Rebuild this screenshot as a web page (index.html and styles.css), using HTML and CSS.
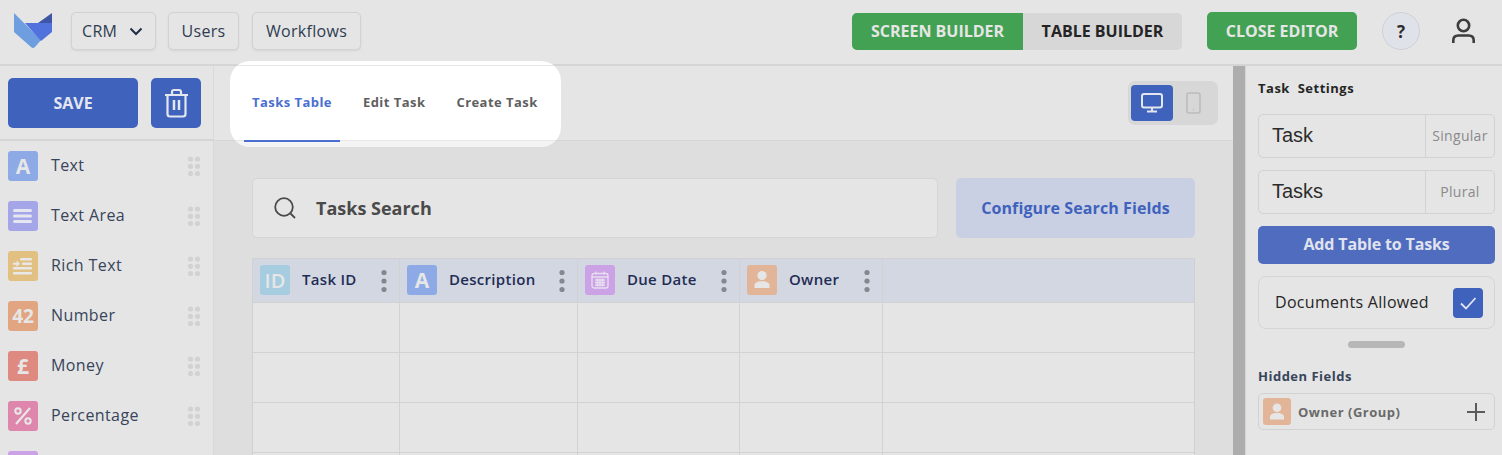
FILE: index.html
```html
<!DOCTYPE html>
<html lang="en">
<head>
  <meta charset="UTF-8" />
  <title>Task Editor</title>
  <link rel="stylesheet" href="styles.css">
</head>
<body>

<svg width="0" height="0" class="sprite">
  <symbol id="person" viewBox="0 0 30 30">
    <circle cx="15" cy="10.5" r="4.6" fill="currentColor"/>
    <path d="M7.5 23v-2.5c0-2.6 2.4-4.3 7.500-4.300s7.500 1.700 7.500 4.300V23z" fill="currentColor"/>
  </symbol>
  <symbol id="grip" viewBox="0 0 14 20">
    <g fill="currentColor">
      <circle cx="3.500" cy="3" r="2.600"/><circle cx="10.500" cy="3" r="2.600"/>
      <circle cx="3.500" cy="10.300" r="2.600"/><circle cx="10.500" cy="10.300" r="2.600"/>
      <circle cx="3.500" cy="17.500" r="2.600"/><circle cx="10.500" cy="17.500" r="2.600"/>
    </g>
  </symbol>
  <symbol id="kebab" viewBox="0 0 6 22">
    <g fill="currentColor"><circle cx="3" cy="3" r="2.600"/><circle cx="3" cy="11.500" r="2.600"/><circle cx="3" cy="20" r="2.600"/></g>
  </symbol>
</svg>

<header class="topbar">
  <svg class="logo" viewBox="0 0 38 36" width="38" height="36">
    <path d="M0 0 L27 27 L21 34 Q19 36 17 34 L0 19z" fill="#6e9de0"/>
    <path d="M11 10 H38 V19 L27 28z" fill="#5172dc"/>
    <path d="M24 10 L38 0 V10z" fill="#3f55a5"/>
  </svg>
  <button class="nav-btn crm-btn">CRM
    <svg width="14" height="9" viewBox="0 0 14 9"><path d="M1.500 1.500 7 7l5.500-5.500" fill="none" stroke="#1f2d45" stroke-width="2"/></svg>
  </button>
  <button class="nav-btn users-btn">Users</button>
  <button class="nav-btn">Workflows</button>

  <div class="builder-switch">
    <span class="builder-tab active">SCREEN BUILDER</span>
    <span class="builder-tab">TABLE BUILDER</span>
  </div>
  <button class="close-btn">CLOSE EDITOR</button>
  <span class="help-btn">?</span>
  <svg class="account" width="23" height="26" viewBox="0 0 23 26" fill="none" stroke="#3d3d3d" stroke-width="2.600">
    <circle cx="11.500" cy="7.500" r="5.700"/>
    <path d="M1.300 25v-2.500c0-3.500 2-5 5-5h10.400c3 0 5 1.500 5 5V25"/>
  </svg>
</header>

<div class="workspace">
  <aside class="fields">
    <div class="actions">
      <button class="save-btn">SAVE</button>
      <button class="trash-btn">
        <svg width="25" height="30" viewBox="0 0 25 30" fill="none" stroke="#e4e6f0" stroke-width="2.200">
          <path d="M1 7h23M8 7V4c0-1.500 1-2 2-2h5c1 0 2 .5 2 2v3"/>
          <path d="M3.500 7v19c0 1.500 1 2.500 2.500 2.500h13c1.500 0 2.500-1 2.500-2.500V7"/>
          <path d="M10 12v10M15 12v10" stroke-width="2.500"/>
        </svg>
      </button>
    </div>
    <div class="field-row">
      <span class="type-icon c-text">A</span><span class="field-name">Text</span>
      <svg class="grip" width="14" height="20"><use href="#grip"/></svg>
    </div>
    <div class="field-row">
      <span class="type-icon c-area">
        <svg width="20" height="14" viewBox="0 0 20 14" fill="#e4e6f0"><rect y="0" width="19" height="3" rx="1.500"/><rect y="5.500" width="19" height="3" rx="1.500"/><rect y="11" width="19" height="3" rx="1.500"/></svg>
      </span><span class="field-name">Text Area</span>
      <svg class="grip" width="14" height="20"><use href="#grip"/></svg>
    </div>
    <div class="field-row">
      <span class="type-icon c-rich">
        <svg width="20" height="17" viewBox="0 0 20 17" fill="#e8e8e8"><rect x="7" y="0" width="12" height="2.500" rx="1"/><rect x="9" y="4.500" width="10" height="2.500" rx="1"/><rect y="9" width="19" height="2.500" rx="1"/><rect y="14" width="19" height="2.500" rx="1"/><path d="M0 4.700h3.500V2.500L7 5.700 3.500 8.800V6.800H0z"/></svg>
      </span><span class="field-name">Rich Text</span>
      <svg class="grip" width="14" height="20"><use href="#grip"/></svg>
    </div>
    <div class="field-row">
      <span class="type-icon c-number">42</span><span class="field-name">Number</span>
      <svg class="grip" width="14" height="20"><use href="#grip"/></svg>
    </div>
    <div class="field-row">
      <span class="type-icon c-money">£</span><span class="field-name">Money</span>
      <svg class="grip" width="14" height="20"><use href="#grip"/></svg>
    </div>
    <div class="field-row">
      <span class="type-icon c-percent">
        <svg width="20" height="20" viewBox="0 0 20 20" fill="none" stroke="#e8e8e8" stroke-width="2"><path d="M17 2 3 18"/><circle cx="5" cy="5" r="2.700"/><circle cx="15" cy="15" r="2.700"/></svg>
      </span><span class="field-name">Percentage</span>
      <svg class="grip" width="14" height="20"><use href="#grip"/></svg>
    </div>
    <div class="field-row">
      <span class="type-icon c-date"></span>
    </div>
  </aside>

  <main class="canvas">
    <div class="tabbar">
      <nav class="tabs">
        <a class="tab active">Tasks Table</a>
        <a class="tab">Edit Task</a>
        <a class="tab">Create Task</a>
      </nav>
      <div class="device-switch">
        <span class="device active">
          <svg width="22" height="20" viewBox="0 0 22 20" fill="none" stroke="#e4e6f0" stroke-width="2"><rect x="1" y="1" width="20" height="13.500" rx="2"/><path d="M11 15v3M6 18.500h10"/></svg>
        </span>
        <span class="device">
          <svg width="15" height="22" viewBox="0 0 15 22" fill="none" stroke="#bcbcbc" stroke-width="1.600"><rect x="1" y="1" width="13" height="20" rx="2"/><path d="M7 17.500h1"/></svg>
        </span>
      </div>
    </div>

    <section class="screen">
      <div class="search-row">
        <div class="search-box">
          <svg width="22" height="22" viewBox="0 0 22 22" fill="none" stroke="#4a4a4a" stroke-width="1.800"><circle cx="10" cy="10" r="8.800"/><path d="m16.500 16.500 4.500 4.500"/></svg>
          <span>Tasks Search</span>
        </div>
        <button class="config-btn">Configure Search Fields</button>
      </div>

      <div class="grid-table">
        <div class="cell head">
          <span class="type-icon c-id">ID</span><span class="col-name">Task ID</span>
          <svg class="kebab" width="6" height="23"><use href="#kebab"/></svg>
        </div>
        <div class="cell head">
          <span class="type-icon c-text">A</span><span class="col-name">Description</span>
          <svg class="kebab" width="6" height="23"><use href="#kebab"/></svg>
        </div>
        <div class="cell head">
          <span class="type-icon c-date">
            <svg width="18" height="18" viewBox="0 0 18 18" fill="none" stroke="#e8e0f0" stroke-width="1.300"><rect x="1" y="2.500" width="16" height="14.500" rx="2"/><path d="M1 6h16M5 .500v3M13 .500v3M4 9h10M4 11.500h10M4 14h10M6.500 7.500v8M9 7.500v8M11.500 7.500v8"/></svg>
          </span><span class="col-name">Due Date</span>
          <svg class="kebab" width="6" height="23"><use href="#kebab"/></svg>
        </div>
        <div class="cell head">
          <span class="type-icon c-owner"><svg width="30" height="30"><use href="#person"/></svg></span><span class="col-name">Owner</span>
          <svg class="kebab" width="6" height="23"><use href="#kebab"/></svg>
        </div>
        <div class="cell head"></div>

        <div class="cell"></div><div class="cell"></div><div class="cell"></div><div class="cell"></div><div class="cell"></div>
        <div class="cell"></div><div class="cell"></div><div class="cell"></div><div class="cell"></div><div class="cell"></div>
        <div class="cell"></div><div class="cell"></div><div class="cell"></div><div class="cell"></div><div class="cell"></div>
        <div class="cell"></div><div class="cell"></div><div class="cell"></div><div class="cell"></div><div class="cell"></div>
      </div>
    </section>
  </main>

  <div class="splitter"></div>

  <aside class="settings">
    <h3 class="settings-title">Task&nbsp; Settings</h3>
    <div class="name-input">
      <span class="name-value">Task</span><span class="name-tag">Singular</span>
    </div>
    <div class="name-input">
      <span class="name-value">Tasks</span><span class="name-tag">Plural</span>
    </div>
    <button class="add-btn">Add Table to Tasks</button>
    <div class="docs-box">
      <span class="docs-label">Documents Allowed</span>
      <span class="checkbox">
        <svg width="18" height="14" viewBox="0 0 18 14" fill="none" stroke="#e4e6f0" stroke-width="1.800"><path d="m2 7.500 5 5L16.500 2"/></svg>
      </span>
    </div>
    <div class="pill"></div>
    <h4 class="hidden-title">Hidden Fields</h4>
    <div class="hidden-field">
      <span class="type-icon small c-owner"><svg width="28" height="28"><use href="#person"/></svg></span>
      <span class="hidden-name">Owner (Group)</span>
      <svg class="plus" width="20" height="20" viewBox="0 0 20 20" stroke="#5a5a5a" stroke-width="2"><path d="M10 1v18M1 10h18"/></svg>
    </div>
  </aside>
</div>

</body>
</html>
```

FILE: styles.css
```css
* {
  box-sizing: border-box;
}

body, html {
  margin: 0;
  padding: 0;
  height: 100%;
  overflow: hidden;
  font-family: 'Open Sans', sans-serif;
  background: #e5e5e5;
}

button {
  font-family: inherit;
  cursor: pointer;
}

.sprite {
  display: block;
  height: 0;
}

/* top bar */
.topbar {
  display: flex;
  align-items: center;
  height: 66px;
  padding: 0 27px 2px 14px;
  border-bottom: 2px solid #d5d5d5;
}

.logo {
  margin-right: 19px;
}

.nav-btn {
  height: 38px;
  margin-right: 13px;
  padding: 0 13px;
  background: #e5e5e5;
  border: 1px solid #d2d2d2;
  border-radius: 5px;
  box-shadow: 0 1px 2px rgba(0,0,0,0.08);
  color: #2f3c50;
  font-size: 16px;
  letter-spacing: 0.3px;
}

.crm-btn {
  display: flex;
  align-items: center;
  gap: 12px;
  width: 85px;
  padding: 0 10px;
  margin-right: 12px;
}

.users-btn {
  width: 71px;
  padding: 0;
}

.builder-switch {
  display: flex;
  height: 37px;
  margin-left: auto;
  background: #d7d7d7;
  border-radius: 5px;
  overflow: hidden;
}

.builder-tab {
  display: flex;
  align-items: center;
  justify-content: center;
  width: 159px;
  color: #242424;
  font-size: 16px;
  font-weight: 700;
}

.builder-tab.active {
  width: 171px;
  background: #43a153;
  color: #e6e6e6;
}

.close-btn {
  width: 150px;
  height: 38px;
  margin-left: 25px;
  background: #43a153;
  border: none;
  border-radius: 5px;
  color: #e6e6e6;
  font-size: 16px;
  font-weight: 700;
}

.help-btn {
  display: flex;
  align-items: center;
  justify-content: center;
  width: 38px;
  height: 38px;
  margin-left: 25px;
  background: #e0e2ea;
  border: 1px solid #cfd0d6;
  border-radius: 50%;
  color: #2c2c2c;
  font-size: 17px;
  font-weight: 700;
}

.account {
  margin-left: 32px;
}

/* main columns */
.workspace {
  display: flex;
  height: 389px;
}

.fields {
  flex: 0 0 214px;
  border-right: 1px solid #d9d9d9;
  overflow: hidden;
}

.actions {
  display: flex;
  gap: 13px;
  height: 75px;
  padding: 12px 0 0 8px;
  border-bottom: 2px solid #d5d5d5;
}

.save-btn {
  width: 130px;
  height: 50px;
  background: #3f62bd;
  border: none;
  border-radius: 5px;
  color: #e4e6f0;
  font-size: 16px;
  font-weight: 700;
}

.trash-btn {
  display: flex;
  align-items: center;
  justify-content: center;
  width: 50px;
  height: 50px;
  padding: 0;
  background: #3f62bd;
  border: none;
  border-radius: 5px;
}

.field-row {
  display: flex;
  align-items: center;
  height: 50px;
  padding: 0 12px 0 8px;
}

.type-icon {
  display: flex;
  flex: 0 0 30px;
  align-items: center;
  justify-content: center;
  width: 30px;
  height: 30px;
  border-radius: 3px;
  color: #e6e6e6;
  font-size: 21px;
  font-weight: 700;
}

.type-icon.small {
  flex-basis: 28px;
  width: 28px;
  height: 27px;
}

.c-text { background: #8daae6; }
.c-area { background: #a4a6e8; }
.c-rich { background: #e1c082; }
.c-number { background: #e2a582; font-size: 19px; }
.c-money { background: #de8a80; }
.c-percent { background: #df86ac; }
.c-date { background: #cba2e6; }
.c-id { background: #a6cce0; font-size: 20px; font-weight: 600; }
.c-owner { background: #e2b598; }

.field-name {
  margin: 0 0 2px 13px;
  color: #37445a;
  font-size: 16px;
  letter-spacing: 0.4px;
}

.grip {
  margin-left: auto;
  color: #d2d2d2;
}

/* centre canvas */
.canvas {
  display: flex;
  flex: 1;
  flex-direction: column;
  min-width: 0;
  background: #dedede;
}

.tabbar {
  display: flex;
  flex: 0 0 75px;
  min-height: 0;
  align-items: center;
  justify-content: space-between;
  padding-left: 16px;
  padding-right: 15px;
  background: #e5e5e5;
  border-bottom: 1px solid #d5d5d5;
}

/* bright spot over the dimmed page */
.tabs {
  position: relative;
  display: flex;
  align-self: flex-start;
  flex: 0 0 331px;
  height: 86px;
  margin-top: -5px;
  padding: 5px 14px 0;
  background: linear-gradient(#fff 4px, #e8e8e8 4px, #e8e8e8 5px, #fff 5px, #fff 79px, #e8e8e8 79px, #e8e8e8 80px, #f4f4f4 80px);
  border-radius: 20px;
}

.tab {
  display: flex;
  align-items: center;
  height: 76px;
  margin-right: 15px;
  padding: 0 8px 4px;
  color: #5f5f5f;
  font-size: 13px;
  font-weight: 700;
  letter-spacing: 0.45px;
  white-space: nowrap;
}

.tab:last-child {
  margin-right: 0;
}

.tab.active {
  padding-bottom: 2px;
  color: #4a6fd0;
  border-bottom: 2px solid #4a6fd0;
}

.device-switch {
  display: flex;
  padding: 4px 5px 4px 3px;
  background: #d7d7d7;
  border-radius: 7px;
}

.device {
  display: flex;
  align-items: center;
  justify-content: center;
  width: 40px;
  height: 36px;
  border-radius: 4px;
}

.device.active {
  width: 42px;
  background: #3f62bd;
}

.screen {
  flex: 1;
  min-height: 0;
  padding: 37px 38px 0;
  overflow: hidden;
}

.search-row {
  display: flex;
  gap: 18px;
  height: 60px;
}

.search-box {
  display: flex;
  flex: 1;
  align-items: center;
  gap: 20px;
  padding-left: 21px;
  background: #e5e5e5;
  border: 1px solid #d5d5d5;
  border-radius: 5px;
  color: #4a4a4a;
  font-size: 18px;
  font-weight: 700;
}

.config-btn {
  width: 239px;
  background: #c9d0e3;
  border: none;
  border-radius: 5px;
  color: #3f62bd;
  font-size: 16px;
  font-weight: 700;
  letter-spacing: 0.1px;
}

.grid-table {
  display: grid;
  grid-template-columns: 147px 178px 162px 143px 1fr;
  grid-template-rows: 44px repeat(4, 50px);
  margin-top: 20px;
  border-top: 1px solid #d0d0d0;
  border-left: 1px solid #d0d0d0;
  border-right: 1px solid #d0d0d0;
}

.cell {
  display: flex;
  align-items: center;
  background: #e5e5e5;
  border-right: 1px solid #d2d2d2;
  border-bottom: 1px solid #d2d2d2;
}

.cell:nth-child(5n) {
  border-right: none;
}

.cell.head {
  padding: 0 12px 1px 7px;
  background: #d3d7e1;
}

.col-name {
  margin: 0 0 2px 12px;
  color: #1f2d55;
  font-size: 15px;
  font-weight: 600;
  letter-spacing: 0.3px;
}

.kebab {
  margin-left: auto;
  color: #83888f;
}

.splitter {
  flex: 0 0 13px;
  background: #adadad;
  border-right: 1px solid #d5d5d5;
}

/* right panel */
.settings {
  flex: 0 0 255px;
  padding: 0 7px 0 12px;
}

.settings-title {
  margin: 13px 0 17px;
  color: #262626;
  font-size: 13px;
  font-weight: 700;
  line-height: 18px;
  letter-spacing: 0.5px;
}

.name-input {
  display: flex;
  height: 44px;
  margin-bottom: 12px;
  border: 1px solid #d2d2d2;
  border-radius: 5px;
}

.name-value {
  flex: 1;
  padding-left: 13px;
  color: #2c2c2c;
  font-family: 'Liberation Sans', sans-serif;
  font-size: 20px;
  line-height: 40px;
}

.name-tag {
  display: flex;
  align-items: center;
  justify-content: center;
  width: 69px;
  padding-bottom: 2px;
  border-left: 1px solid #d2d2d2;
  color: #8a8a8a;
  font-size: 14px;
  letter-spacing: 0.3px;
}

.add-btn {
  display: block;
  width: 237px;
  height: 38px;
  padding: 0 0 2px;
  background: #4f6cbf;
  border: none;
  border-radius: 5px;
  color: #e0e3ee;
  font-size: 16px;
  font-weight: 700;
  letter-spacing: -0.15px;
}

.docs-box {
  display: flex;
  align-items: center;
  justify-content: space-between;
  height: 53px;
  margin-top: 12px;
  padding: 0 11px 0 16px;
  border: 1px solid #d5d5d5;
  border-radius: 8px;
  color: #262626;
  font-size: 16px;
  letter-spacing: 0.3px;
}

.docs-label {
  margin-bottom: 2px;
}

.checkbox {
  display: flex;
  align-items: center;
  justify-content: center;
  width: 30px;
  height: 30px;
  background: #3f62bd;
  border-radius: 4px;
}

.pill {
  width: 57px;
  height: 7px;
  margin: 12px 0 0 90px;
  background: #b7b7b7;
  border-radius: 4px;
}

.hidden-title {
  margin: 19px 0 8px;
  color: #37445a;
  font-size: 13px;
  font-weight: 700;
  line-height: 18px;
  letter-spacing: 0.5px;
}

.hidden-field {
  display: flex;
  align-items: center;
  height: 37px;
  padding: 0 8px 0 4px;
  border: 1px solid #d2d2d2;
  border-radius: 5px;
}

.hidden-name {
  margin-left: 7px;
  color: #6a6a6a;
  font-size: 13px;
  font-weight: 700;
  letter-spacing: 0.5px;
}

.plus {
  margin-left: auto;
}
```
